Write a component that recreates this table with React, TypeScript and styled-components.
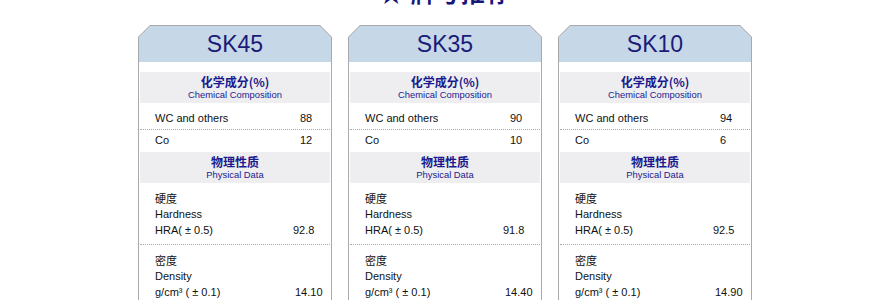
import * as React from "react";
import styled, { createGlobalStyle } from "styled-components";

interface Grade {
  name: string;
  wc: string;
  co: string;
  hardness: string;
  density: string;
}

const grades: Grade[] = [
  { name: "SK45", wc: "88", co: "12", hardness: "92.8", density: "14.10" },
  { name: "SK35", wc: "90", co: "10", hardness: "91.8", density: "14.40" },
  { name: "SK10", wc: "94", co: "6", hardness: "92.5", density: "14.90" },
];

const GlobalStyle = createGlobalStyle`
  body {
    margin: 0;
    background: #ffffff;
    font-family: "Liberation Sans", "Noto Sans CJK SC", sans-serif;
  }
`;

const Page = styled.div`
  width: 890px;
  height: 300px;
  overflow: hidden;
`;

const Title = styled.h1`
  margin: -20px 0 0;
  height: 24px;
  line-height: 24px;
  font-size: 24px;
  font-weight: bold;
  text-align: center;
  color: #17177a;
  font-family: "Noto Sans CJK SC", "Liberation Sans", sans-serif;
  letter-spacing: 1px;
`;

const Cards = styled.div`
  display: flex;
  justify-content: center;
  gap: 16px;
  margin-top: 21px;
`;

const Frame = styled.div`
  width: 194px;
  padding: 1px 1px 0;
  background: #a9a9ad;
  box-sizing: border-box;
  clip-path: polygon(12px 0, calc(100% - 12px) 0, 100% 12px, 100% 100%, 0 100%, 0 12px);
`;

const Inner = styled.div`
  background: #ffffff;
  padding-bottom: 20px;
  clip-path: polygon(11.5px 0, calc(100% - 11.5px) 0, 100% 11.5px, 100% 100%, 0 100%, 0 11.5px);
`;

const Header = styled.div`
  height: 36px;
  line-height: 36px;
  background: #c6d7e7;
  text-align: center;
  font-size: 23px;
  color: #1b1b78;
`;

const Band = styled.div<{ $top: number }>`
  margin: ${(p) => p.$top}px 1px 0;
  padding: 3px 0 2px;
  background: #eeeef1;
  text-align: center;
  color: #1a1a8e;
`;

const BandTitle = styled.div`
  font-family: "Noto Sans CJK SC", "Liberation Sans", sans-serif;
  font-size: 12px;
  font-weight: bold;
  line-height: 14px;
`;

const BandSub = styled.div`
  font-size: 9.4px;
  line-height: 12px;
`;

const List = styled.div`
  padding: 5px 1px 1px;
`;

const Row = styled.div<{ $valueAt: number }>`
  display: grid;
  grid-template-columns: ${(p) => p.$valueAt}px 1fr;
  align-items: end;
  padding: 0 0 0 15px;
  height: 21px;
  line-height: 21px;
  font-size: 11px;
  color: #111111;
  &:not(:last-child) {
    border-bottom: 1px dotted #a7a7a7;
  }
`;

const Group = styled.div<{ $valueAt: number }>`
  display: grid;
  grid-template-columns: ${(p) => p.$valueAt}px 1fr;
  align-items: end;
  margin: 0 1px;
  padding: 7px 0 6px 15px;
  line-height: 16px;
  font-size: 11px;
  color: #111111;
  border-bottom: 1px dotted #a7a7a7;
`;

const Cn = styled.div`
  font-family: "Noto Sans CJK SC", "Liberation Sans", sans-serif;
  font-size: 11px;
`;

const Value = styled.span`
  white-space: nowrap;
`;

function Card({ grade }: { grade: Grade }) {
  return (
    <Frame>
      <Inner>
        <Header>{grade.name}</Header>
        <Band $top={10}>
          <BandTitle>化学成分(%)</BandTitle>
          <BandSub>Chemical Composition</BandSub>
        </Band>
        <List>
          <Row $valueAt={145}>
            <span>WC and others</span>
            <Value>{grade.wc}</Value>
          </Row>
          <Row $valueAt={145}>
            <span>Co</span>
            <Value>{grade.co}</Value>
          </Row>
        </List>
        <Band $top={0}>
          <BandTitle>物理性质</BandTitle>
          <BandSub>Physical Data</BandSub>
        </Band>
        <Group $valueAt={138}>
          <div>
            <Cn>硬度</Cn>
            <div>Hardness</div>
            <div>HRA( ± 0.5)</div>
          </div>
          <Value>{grade.hardness}</Value>
        </Group>
        <Group $valueAt={140}>
          <div>
            <Cn>密度</Cn>
            <div>Density</div>
            <div>g/cm³ ( ± 0.1)</div>
          </div>
          <Value>{grade.density}</Value>
        </Group>
      </Inner>
    </Frame>
  );
}

export default function App(): React.ReactElement {
  return (
    <Page>
      <GlobalStyle />
      <Title>★ 牌号推荐</Title>
      <Cards>
        {grades.map((g) => (
          <Card key={g.name} grade={g} />
        ))}
      </Cards>
    </Page>
  );
}
